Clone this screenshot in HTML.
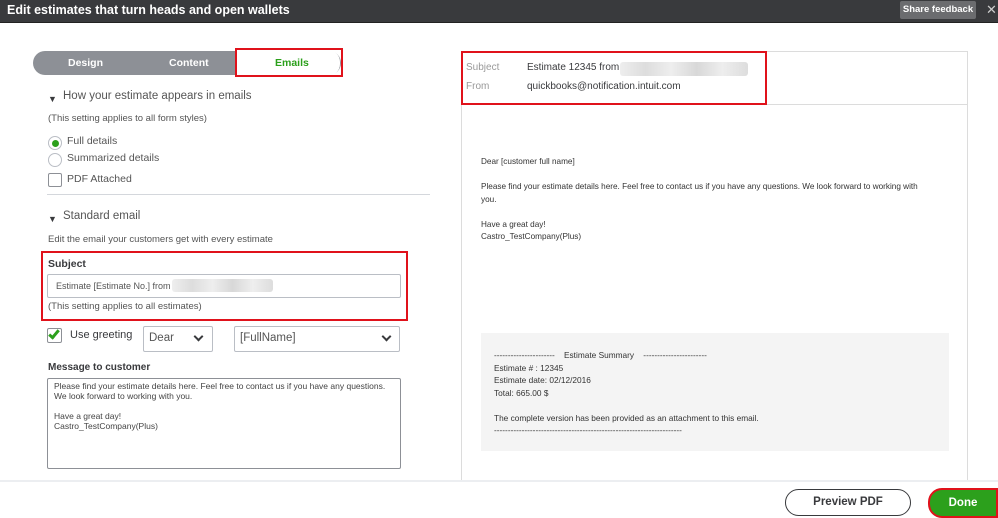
<!DOCTYPE html>
<html><head><style>
*{box-sizing:border-box;margin:0;padding:0}
body{width:998px;height:518px;overflow:hidden;background:#fff;font-family:"Liberation Sans",sans-serif;color:#393a3d;position:relative}
.a{position:absolute;white-space:nowrap}
.hdr{left:0;top:0;width:998px;height:23px;background:#393a3d;border-bottom:1px solid #222}
.sel{border:1px solid #babec5;border-radius:2px;background:#fff}
.chev{position:absolute;width:7px;height:7px;border-right:2px solid #393a3d;border-bottom:2px solid #393a3d;transform:rotate(45deg)}
.blur{background:linear-gradient(90deg,#eee,#ddd 20%,#eee 40%,#d8d8d8 60%,#eee 80%,#ddd);border-radius:3px}
</style></head><body>
<div class="a hdr"></div>
<div class="a" style="left:7px;top:3px;color:#fff;font-size:12.5px;font-weight:bold">Edit estimates that turn heads and open wallets</div>
<div class="a" style="left:900px;top:1px;width:76px;height:18px;background:#6b6c6f;border-radius:2px;color:#fff;font-size:9.5px;font-weight:bold;text-align:center;line-height:18px">Share feedback</div>
<div class="a" style="left:986px;top:2px;color:#ccc;font-size:13px">✕</div>

<div class="a" style="left:33px;top:51px;width:308px;height:24px;background:#8d9096;border-radius:12px"></div>
<div class="a" style="left:68px;top:57px;color:#fff;font-size:10.5px;font-weight:bold">Design</div>
<div class="a" style="left:169px;top:57px;color:#fff;font-size:10.5px;font-weight:bold">Content</div>
<div class="a" style="left:236px;top:50px;width:104px;height:26px;background:#fff;border-radius:0 12px 12px 0"></div>
<div class="a" style="left:235px;top:48px;width:108px;height:29px;border:2px solid #e0121b"></div>
<div class="a" style="left:275px;top:57px;color:#2ca01c;font-size:10.5px;font-weight:bold">Emails</div>

<div class="a" style="left:48px;top:94px;font-size:9px">▼</div>
<div class="a" style="left:63px;top:90px;font-size:11.5px;color:#555">How your estimate appears in emails</div>
<div class="a" style="left:48px;top:113px;font-size:9.5px;color:#555">(This setting applies to all form styles)</div>
<div class="a" style="left:48px;top:136px;width:14px;height:14px;border:1px solid #babec5;border-radius:50%"></div>
<div class="a" style="left:52px;top:140px;width:7px;height:7px;background:#2ca01c;border-radius:50%"></div>
<div class="a" style="left:67px;top:135px;font-size:10.5px;color:#555">Full details</div>
<div class="a" style="left:48px;top:153px;width:14px;height:14px;border:1px solid #babec5;border-radius:50%"></div>
<div class="a" style="left:67px;top:152px;font-size:10.5px;color:#555">Summarized details</div>
<div class="a" style="left:48px;top:173px;width:14px;height:14px;border:1px solid #8d9096;border-radius:2px"></div>
<div class="a" style="left:67px;top:173px;font-size:10.5px;color:#555">PDF Attached</div>
<div class="a" style="left:47px;top:194px;width:383px;height:1px;background:#d4d7dc"></div>
<div class="a" style="left:48px;top:214px;font-size:9px">▼</div>
<div class="a" style="left:63px;top:210px;font-size:11.5px;color:#555">Standard email</div>
<div class="a" style="left:48px;top:234px;font-size:9.5px;color:#555">Edit the email your customers get with every estimate</div>

<div class="a" style="left:41px;top:251px;width:367px;height:70px;border:2px solid #e0121b"></div>
<div class="a" style="left:48px;top:258px;font-size:10.5px;font-weight:bold">Subject</div>
<div class="a sel" style="left:47px;top:274px;width:354px;height:24px"></div>
<div class="a" style="left:56px;top:281px;font-size:9px;color:#555">Estimate [Estimate No.] from</div>
<div class="a blur" style="left:172px;top:279px;width:101px;height:13px"></div>
<div class="a" style="left:48px;top:301px;font-size:9.5px;color:#555">(This setting applies to all estimates)</div>

<div class="a" style="left:47px;top:328px;width:15px;height:15px;border:1px solid #8d9096;border-radius:2px"></div>
<div class="a" style="left:51px;top:328px;width:6px;height:11px;border-right:3px solid #2ca01c;border-bottom:3px solid #2ca01c;transform:rotate(40deg)"></div>
<div class="a" style="left:70px;top:329px;font-size:11px">Use greeting</div>
<div class="a sel" style="left:143px;top:326px;width:70px;height:26px"></div>
<div class="a" style="left:149px;top:332px;font-size:11.5px;color:#555">Dear</div>
<div class="chev" style="left:195px;top:333px"></div>
<div class="a sel" style="left:234px;top:326px;width:166px;height:26px"></div>
<div class="a" style="left:240px;top:332px;font-size:11.5px;color:#555">[FullName]</div>
<div class="chev" style="left:383px;top:333px"></div>

<div class="a" style="left:48px;top:362px;font-size:10px;font-weight:bold">Message to customer</div>
<div class="a sel" style="left:47px;top:378px;width:354px;height:91px;border-color:#8d9096"></div>
<div class="a" style="left:54px;top:381px;font-size:8.5px;line-height:10px;color:#444;white-space:pre">Please find your estimate details here. Feel free to contact us if you have any questions.
We look forward to working with you.

Have a great day!
Castro_TestCompany(Plus)</div>

<div class="a" style="left:461px;top:51px;width:507px;height:430px;border:1px solid #dcdcdc"></div>
<div class="a" style="left:462px;top:104px;width:505px;height:1px;background:#dcdcdc"></div>
<div class="a" style="left:461px;top:51px;width:306px;height:54px;border:2px solid #e0121b"></div>
<div class="a" style="left:466px;top:62px;font-size:10px;color:#999">Subject</div>
<div class="a" style="left:527px;top:62px;font-size:10px">Estimate 12345 from</div>
<div class="a blur" style="left:620px;top:62px;width:128px;height:14px"></div>
<div class="a" style="left:466px;top:81px;font-size:10px;color:#999">From</div>
<div class="a" style="left:527px;top:81px;font-size:10px">quickbooks@notification.intuit.com</div>
<div class="a" style="left:481px;top:156px;font-size:8.2px;line-height:12.5px;color:#333;white-space:pre">Dear [customer full name]

Please find your estimate details here. Feel free to contact us if you have any questions. We look forward to working with
you.

Have a great day!
Castro_TestCompany(Plus)</div>
<div class="a" style="left:481px;top:333px;width:468px;height:118px;background:#f4f4f4"></div>
<div class="a" style="left:494px;top:349px;font-size:8.3px;line-height:12.5px;color:#333;white-space:pre">----------------------    Estimate Summary    -----------------------
Estimate # : 12345
Estimate date: 02/12/2016
Total: 665.00 $

The complete version has been provided as an attachment to this email.
--------------------------------------------------------------------</div>

<div class="a" style="left:0;top:480px;width:998px;height:38px;background:#fff;border-top:2px solid #eceef1"></div>
<div class="a" style="left:785px;top:489px;width:126px;height:27px;border:1px solid #393a3d;border-radius:14px;text-align:center;line-height:25px;font-size:11.5px;font-weight:bold">Preview PDF</div>
<div class="a" style="left:928px;top:488px;width:70px;height:30px;background:#2ca01c;border:2px solid #e0121b;border-radius:14px 0 0 14px;color:#fff;text-align:center;line-height:26px;font-size:11.5px;font-weight:bold">Done</div>
</body></html>
